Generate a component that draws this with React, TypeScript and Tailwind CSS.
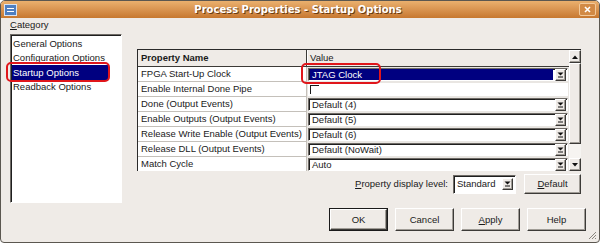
import React from 'react'

const raised =
  'border border-t-white border-l-white border-b-[#3c3a37] border-r-[#3c3a37] shadow-[inset_-1px_-1px_0_#a09c96]'
const sunken =
  'border border-t-[#6e6a65] border-l-[#6e6a65] border-b-white border-r-white shadow-[inset_1px_1px_0_#1e1e1e]'

const DropArrow = () => (
  <div className={`flex h-[12px] w-[11px] shrink-0 items-center justify-center bg-[#efebe7] ${raised}`}>
    <svg width="7" height="6" viewBox="0 0 7 6">
      <polygon points="0.5,0.5 6.5,0.5 3.5,3.5" fill="#111" />
      <rect x="1" y="4.5" width="5" height="1" fill="#111" />
    </svg>
  </div>
)

const Combo = ({ text, selected }: { text: string; selected?: boolean }) => (
  <div className={`flex h-full w-full items-center bg-white pl-[1px] pr-[1px] ${sunken}`}>
    <div
      className={`flex h-[11px] flex-1 items-center pl-[2px] ${
        selected ? 'mr-[2px] bg-[#000080] text-white' : ''
      }`}
    >
      {text}
    </div>
    <DropArrow />
  </div>
)

const rows: { name: string; value: string | null }[] = [
  { name: 'FPGA Start-Up Clock', value: 'JTAG Clock' },
  { name: 'Enable Internal Done Pipe', value: null },
  { name: 'Done (Output Events)', value: 'Default (4)' },
  { name: 'Enable Outputs (Output Events)', value: 'Default (5)' },
  { name: 'Release Write Enable (Output Events)', value: 'Default (6)' },
  { name: 'Release DLL (Output Events)', value: 'Default (NoWait)' },
  { name: 'Match Cycle', value: 'Auto' },
]

const categories = ['General Options', 'Configuration Options', 'Startup Options', 'Readback Options']

const Button = ({ children, isDefault }: { children: React.ReactNode; isDefault?: boolean }) => (
  <div className={`h-[23px] w-[59px] ${isDefault ? 'border border-[#1a1a1a]' : ''}`}>
    <div className={`flex h-full w-full items-center justify-center bg-[#efebe7] ${raised}`}>{children}</div>
  </div>
)

export default function App() {
  return (
    <div className="relative flex h-[243px] w-[600px] flex-col overflow-hidden rounded-t-[5px] rounded-b-[4px] border border-[#5b5750] bg-[#efebe7] font-['Liberation_Sans',Arial,sans-serif] text-[9.5px] leading-none text-[#1a1a1a]">
      {/* title bar */}
      <div className="flex h-[17px] shrink-0 items-center bg-gradient-to-b from-[#eab06e] to-[#c7782f] px-[3px]">
        <div className="flex h-[12px] w-[13px] items-center justify-center border border-[#d8e4f4] bg-[#4f7fc0]">
          <div className="h-[4px] w-[7px] border-t border-b border-white" />
        </div>
        <div className="flex-1 text-center font-['DejaVu_Sans',sans-serif] text-[10px] font-bold text-white [text-shadow:1px_1px_0_#6a3a10]">
          Process Properties - Startup Options
        </div>
        <div className="flex h-[13px] w-[17px] items-center justify-center rounded-[2px] border border-[#f2c99a] bg-[#d28a45]">
          <svg width="7" height="7" viewBox="0 0 7 7">
            <path d="M1 1 L6 6 M6 1 L1 6" stroke="white" strokeWidth="1.6" />
          </svg>
        </div>
      </div>

      {/* body */}
      <div className="flex flex-1 flex-col pl-[9px] pr-[13px]">
        <div className="mt-[1px] flex h-[12px] items-center">
          <span>
            <span className="underline">C</span>ategory
          </span>
        </div>

        <div className="mt-[3px] flex h-[169px]">
          <div className={`relative h-full w-[112px] shrink-0 bg-white pt-[1px] pl-[1px] ${sunken}`}>
            {categories.map((c, i) => (
              <div
                key={c}
                className={`flex h-[14.5px] w-[96px] items-center pl-[1px] ${
                  i === 2 ? 'bg-[#000080] text-white' : ''
                }`}
              >
                {c}
              </div>
            ))}
            <div className="absolute left-[-5px] top-[27px] h-[20px] w-[104px] rounded-[5px] border-2 border-[#e0161b]" />
          </div>

          <div className="ml-[15px] flex w-[444px] flex-col pt-[15px]">
            {/* table */}
            <div className="relative flex h-[122px] border-t border-l border-[#2a2a2a]">
              <div className="flex flex-1 flex-col overflow-hidden">
                <div className="flex h-[17px] shrink-0 border-b border-[#3c3a37] bg-[#efebe7]">
                  <div className="flex w-[169px] items-center border-r border-[#3c3a37] pl-[3px] font-bold">
                    Property Name
                  </div>
                  <div className="flex flex-1 items-center border-l border-white pl-[2px]">Value</div>
                </div>
                {rows.map((r) => (
                  <div key={r.name} className="flex h-[15px] shrink-0">
                    <div className="flex w-[169px] items-center border-r border-b border-[#c4c0ba] bg-white pl-[3px]">
                      {r.name}
                    </div>
                    <div className="flex-1 bg-[#e9e6e2] p-[1px]">
                      {r.value === null ? (
                        <div className="flex h-full w-full items-center bg-white pl-[2px]">
                          <div className="h-[9px] w-[9px] border-t border-l border-[#1a1a1a]" />
                        </div>
                      ) : (
                        <Combo text={r.value} selected={r.name === 'FPGA Start-Up Clock'} />
                      )}
                    </div>
                  </div>
                ))}
              </div>
              {/* scrollbar */}
              <div className="flex w-[12px] shrink-0 flex-col bg-[#f6f4f1]">
                <div className={`flex h-[13px] items-center justify-center bg-[#efebe7] ${raised}`}>
                  <svg width="6" height="4" viewBox="0 0 6 4">
                    <polygon points="0,4 6,4 3,0.5" fill="#111" />
                  </svg>
                </div>
                <div className={`h-[81px] bg-[#efebe7] ${raised}`} />
                <div className="flex-1" />
                <div className={`flex h-[13px] items-center justify-center bg-[#efebe7] ${raised}`}>
                  <svg width="6" height="4" viewBox="0 0 6 4">
                    <polygon points="0,0 6,0 3,3.5" fill="#111" />
                  </svg>
                </div>
              </div>
              <div className="absolute left-[163px] top-[13px] h-[21px] w-[80px] rounded-[5px] border-2 border-[#e0161b]" />
            </div>

            {/* display level */}
            <div className="mt-[3px] flex h-[20px] items-center justify-end">
              <span className="mr-[5px]">
                <span className="underline">P</span>roperty display level:
              </span>
              <div className={`flex h-[19px] w-[63px] items-center bg-white pl-[3px] pr-[2px] ${sunken}`}>
                <span className="flex-1">Standard</span>
                <DropArrow />
              </div>
              <div className={`ml-[8px] flex h-[20px] w-[57px] items-center justify-center bg-[#efebe7] ${raised}`}>
                <span>
                  <span className="underline">D</span>efault
                </span>
              </div>
            </div>
          </div>
        </div>

        {/* buttons */}
        <div className="mt-[5px] flex justify-end gap-[7px]">
          <Button isDefault>OK</Button>
          <Button>Cancel</Button>
          <Button>
            <span>
              <span className="underline">A</span>pply
            </span>
          </Button>
          <Button>Help</Button>
        </div>
      </div>

      <svg className="absolute right-[2px] bottom-[2px]" width="10" height="10" viewBox="0 0 10 10">
        <path d="M9 2 L2 9 M9 5 L5 9 M9 8 L8 9" stroke="#8a857e" strokeWidth="1" />
      </svg>
    </div>
  )
}
